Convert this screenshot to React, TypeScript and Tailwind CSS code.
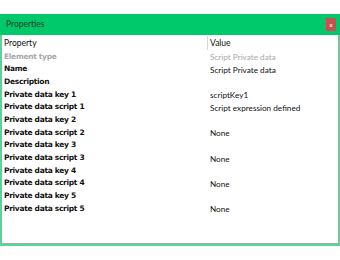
import React from "react";

const rows: [string, string, boolean][] = [
  ["Element type", "Script Private data", true],
  ["Name", "Script Private data", false],
  ["Description", "", false],
  ["Private data key 1", "scriptKey1", false],
  ["Private data script 1", "Script expression defined", false],
  ["Private data key 2", "", false],
  ["Private data script 2", "None", false],
  ["Private data key 3", "", false],
  ["Private data script 3", "None", false],
  ["Private data key 4", "", false],
  ["Private data script 4", "None", false],
  ["Private data key 5", "", false],
  ["Private data script 5", "None", false],
];

export default function App() {
  return (
    <div className="w-[340px] h-[260px] bg-white pt-[14px]" style={{ fontFamily: 'Lato, "Open Sans", sans-serif' }}>
      <div className="h-[232px] bg-[#4fd896] flex flex-col pl-[2px] pr-[1px] pb-[2px]">
        <div className="h-[21px] -ml-[2px] -mr-[1px] bg-[#00c96b] flex items-center justify-between pl-[6px] pr-[4px]">
          <span className="text-[8.5px] text-[#143d25] leading-none">Properties</span>
          <div className="w-[10px] h-[13px] bg-[#c9504f] flex items-center justify-center text-[6px] text-white leading-none">x</div>
        </div>
        <div className="flex-1 bg-white border-r border-b border-[#a9a9a9] pl-[2px] pt-[1px]">
          <div className="flex h-[14px] items-center">
            <div className="w-[203px] text-[8.5px] text-[#111] leading-none">Property</div>
            <div className="w-px h-[14px] bg-[#d8d8d8]" />
            <div className="pl-[2px] text-[8.5px] text-[#111] leading-none">Value</div>
          </div>
          {rows.map(([k, v, grey], i) => (
            <div key={i} className="flex h-[12.7px] items-center">
              <div
                className={`w-[206px] text-[7.5px] font-bold leading-none ${grey ? "text-[#a8a8a8]" : "text-[#111]"}`}
                style={{ fontFamily: '"DejaVu Sans", sans-serif', letterSpacing: "-0.3px" }}
              >
                {k}
              </div>
              <div className={`pt-[2px] text-[8.2px] leading-none ${grey ? "text-[#a8a8a8]" : "text-[#111]"}`}>{v}</div>
            </div>
          ))}
        </div>
      </div>
    </div>
  );
}
